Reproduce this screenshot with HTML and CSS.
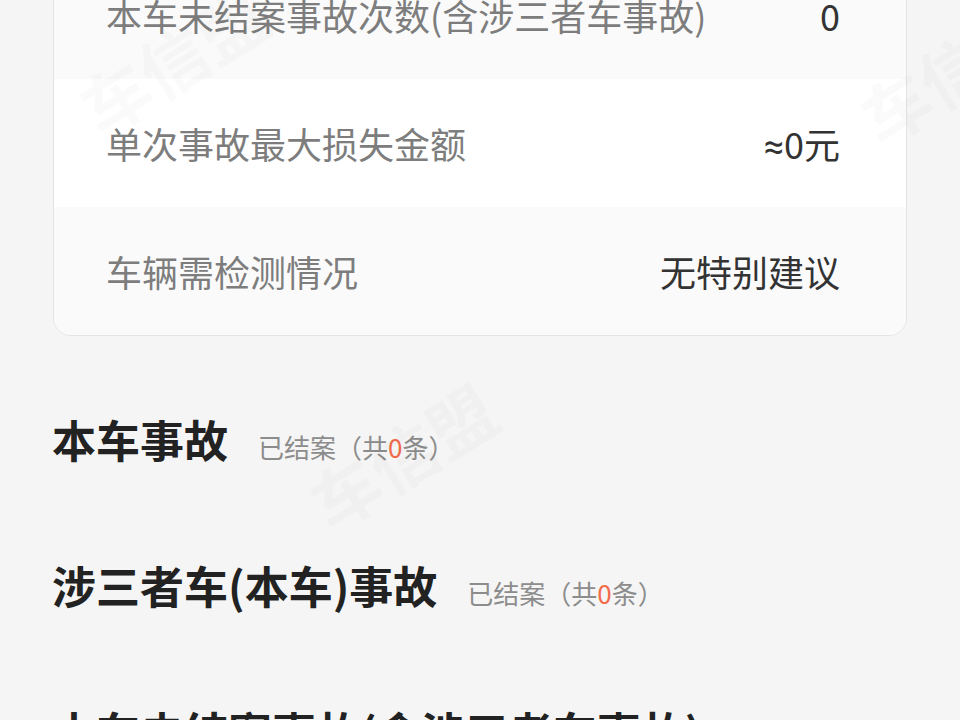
FILE: index.html
```html
<!DOCTYPE html>
<html>

<head>
    <title>出险记录</title>
    <link rel="stylesheet" href="styles.css">
</head>

<body>
    <!-- Summary card -->
    <div class="summary-card">
        <div class="summary-row shaded">
            <span class="row-label">本车未结案事故次数(含涉三者车事故)</span>
            <span class="row-value">0</span>
        </div>
        <div class="summary-row">
            <span class="row-label">单次事故最大损失金额</span>
            <span class="row-value"><span class="approx">≈</span>0元</span>
        </div>
        <div class="summary-row shaded">
            <span class="row-label">车辆需检测情况</span>
            <span class="row-value">无特别建议</span>
        </div>
    </div>

    <!-- Accident sections -->
    <div class="sections">
        <div class="section-title">
            <h2>本车事故</h2>
            <span class="section-count">已结案（共<em>0</em>条）</span>
        </div>
        <div class="section-title">
            <h2>涉三者车(本车)事故</h2>
            <span class="section-count">已结案（共<em>0</em>条）</span>
        </div>
        <div class="section-title">
            <h2>本车未结案事故(含涉三者车事故)</h2>
        </div>
    </div>

    <!-- Watermarks -->
    <div class="watermark wm-center">车信盟</div>
    <div class="watermark wm-left">车信盟</div>
    <div class="watermark wm-right">车信盟</div>
</body>

</html>
```

FILE: styles.css
```css
/* General page styles */
body {
    margin: 0;
    background-color: #f5f5f5;
    font-family: "Noto Sans CJK SC", "Noto Sans", sans-serif;
    overflow: hidden;
    height: 720px;
    position: relative;
}

/* Summary card */
.summary-card {
    margin: -50px 53px 0 53px;
    background: #fff;
    border: 1px solid #e4e4e4;
    border-radius: 18px;
    overflow: hidden;
}

.summary-row {
    height: 128px;
    display: flex;
    align-items: center;
    justify-content: space-between;
    padding: 0 66px 0 52px;
    font-size: 36px;
}

.summary-row.shaded {
    background: #fafafa;
}

.row-label {
    color: #7d7d7d;
}

.row-value {
    color: #333;
}

.approx {
    font-family: "Roboto", sans-serif;
}

/* Section headings */
.sections {
    display: flex;
    flex-direction: column;
    gap: 86px;
    padding: 73px 52px 0 52px;
}

.section-title {
    display: flex;
    align-items: baseline;
    height: 60px;
    line-height: 60px;
}

.section-title h2 {
    margin: 0;
    font-size: 44px;
    font-weight: bold;
    color: #222;
    white-space: nowrap;
}

.section-count {
    margin-left: 30px;
    font-size: 26px;
    color: #8c8c8c;
}

.section-count em {
    font-style: normal;
    color: #f26b4a;
}

/* Faint watermarks over the page */
.watermark {
    position: absolute;
    font-size: 68px;
    font-weight: bold;
    color: rgba(0, 0, 0, 0.018);
    transform: rotate(-32deg);
    white-space: nowrap;
    pointer-events: none;
}

.wm-center {
    left: 300px;
    top: 405px;
}

.wm-left {
    left: 70px;
    top: 10px;
}

.wm-right {
    left: 850px;
    top: 20px;
}
```
